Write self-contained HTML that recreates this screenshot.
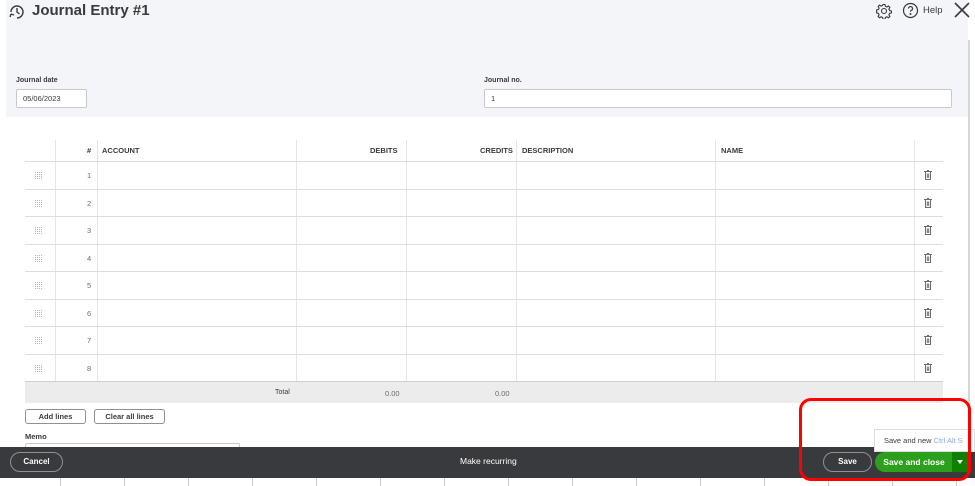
<!DOCTYPE html>
<html><head><meta charset="utf-8"><style>
*{margin:0;padding:0;box-sizing:border-box}
body{width:975px;height:486px;overflow:hidden;background:#fff;font-family:"Liberation Sans",Arial,sans-serif;position:relative;color:#393a3d}
.a{position:absolute}
.hd{font-size:7.5px;font-weight:bold;color:#393a3d}
.hl{background:#dcdde0;height:1px}
.vl{background:#e4e5e8;width:1px}
.num{font-size:7.5px;color:#6b6c72}
.btn{border:1px solid #8d9096;border-radius:3px;background:#fff;font-size:7.5px;font-weight:bold;text-align:center;line-height:13px;height:15px}
</style></head><body>
<div class="a" style="left:6px;top:0;width:962px;height:117px;background:#f4f5f8"></div>
<div class="a" style="left:968px;top:40px;width:2px;height:400px;background:#d6d7da"></div>
<svg class="a" style="left:8px;top:3px" width="18" height="18" viewBox="0 0 18 18" fill="none" stroke="#393a3d" stroke-width="1.4"><path d="M3 9a6 6 0 1 1 6 6" /><path d="M3 11l-1 3M3 11l3 1" /><path d="M9 5v4l2.5 2"/></svg>
<div class="a" style="left:32px;top:2px;font-size:15px;font-weight:bold;color:#393a3d">Journal Entry #1</div>
<svg class="a" style="left:876px;top:3px" width="16" height="16" viewBox="0 0 16 16" fill="none" stroke="#393a3d" stroke-width="1.1"><circle cx="8" cy="8" r="2.5"/><path d="M7 1.5h2l.4 1.8 1.5.7 1.6-1 1.4 1.4-1 1.6.7 1.5 1.8.4v2l-1.8.4-.7 1.5 1 1.6-1.4 1.4-1.6-1-1.5.7-.4 1.8H7l-.4-1.8-1.5-.7-1.6 1-1.4-1.4 1-1.6-.7-1.5-1.8-.4V7l1.8-.4.7-1.5-1-1.6 1.4-1.4 1.6 1 1.5-.7z"/></svg>
<svg class="a" style="left:902px;top:2px" width="17" height="17" viewBox="0 0 17 17" fill="none" stroke="#393a3d" stroke-width="1.2"><circle cx="8.5" cy="8.5" r="7"/><path d="M6.5 6.5a2 2 0 1 1 2.5 2c-.5.2-.5.6-.5 1.3"/><circle cx="8.5" cy="12" r=".4" fill="#393a3d"/></svg>
<div class="a" style="left:923px;top:5px;font-size:9.5px;color:#393a3d">Help</div>
<svg class="a" style="left:954px;top:2px" width="16" height="16" viewBox="0 0 16 16" stroke="#393a3d" stroke-width="1.6"><path d="M1 1l14 14M15 1L1 15"/></svg>
<div class="a hd" style="left:16px;top:77px;font-size:7px">Journal date</div>
<div class="a" style="left:16px;top:89px;width:71px;height:19px;background:#fff;border:1px solid #c9cacd;border-radius:2px;font-size:7.5px;line-height:17px;padding-left:6px;color:#393a3d">05/06/2023</div>
<div class="a hd" style="left:484px;top:77px;font-size:7px">Journal no.</div>
<div class="a" style="left:484px;top:89px;width:468px;height:19px;background:#fff;border:1px solid #c9cacd;border-radius:2px;font-size:7.5px;line-height:17px;padding-left:6px">1</div>
<div class="a" style="left:25px;top:381px;width:918px;height:22px;background:#ececec"></div>
<div class="a hl" style="left:25px;top:381px;width:918px;background:#cfd0d3"></div>
<div class="a vl" style="left:55px;top:140px;height:241px"></div>
<div class="a vl" style="left:97px;top:140px;height:241px"></div>
<div class="a vl" style="left:296px;top:140px;height:241px"></div>
<div class="a vl" style="left:406px;top:140px;height:241px"></div>
<div class="a vl" style="left:516px;top:140px;height:241px"></div>
<div class="a vl" style="left:715px;top:140px;height:241px"></div>
<div class="a vl" style="left:914px;top:140px;height:241px"></div>
<div class="a hd" style="left:87px;top:146px">#</div>
<div class="a hd" style="left:102px;top:146px">ACCOUNT</div>
<div class="a hd" style="left:370px;top:146px">DEBITS</div>
<div class="a hd" style="left:480px;top:146px">CREDITS</div>
<div class="a hd" style="left:522px;top:146px">DESCRIPTION</div>
<div class="a hd" style="left:721px;top:146px">NAME</div>
<div id="rows"></div>
<div class="a num" style="left:275px;top:389px;font-size:7px;color:#393a3d">Total</div>
<div class="a num" style="left:385px;top:389px">0.00</div>
<div class="a num" style="left:495px;top:389px">0.00</div>
<div class="a btn" style="left:25px;top:409px;width:61px">Add lines</div>
<div class="a btn" style="left:94px;top:409px;width:71px">Clear all lines</div>
<div class="a hd" style="left:25px;top:432px">Memo</div>
<div class="a" style="left:25px;top:443px;width:215px;height:6px;border:1px solid #c9cacd;border-bottom:none;border-radius:2px 2px 0 0"></div>
<div class="a" style="left:0;top:447px;width:975px;height:31px;background:#393a3d"></div>
<div class="a" style="left:10px;top:452px;width:53px;height:20px;border:1px solid #8d9096;border-radius:10px;color:#fff;font-size:8px;font-weight:bold;text-align:center;line-height:18px">Cancel</div>
<div class="a" style="left:460px;top:456px;color:#fff;font-size:8.5px">Make recurring</div>
<div class="a" style="left:823px;top:452px;width:49px;height:20px;border:1px solid #8d9096;border-radius:10px;color:#fff;font-size:8px;font-weight:bold;text-align:center;line-height:18px">Save</div>
<div class="a" style="left:875px;top:452px;width:94px;height:20px;background:#2ca01c;border-radius:10px 0 0 10px;color:#fff;font-size:8.5px;font-weight:bold;text-align:center;line-height:20px;padding-right:16px">Save and close</div>
<div class="a" style="left:952px;top:452px;width:17px;height:20px;background:#108000"></div>
<div class="a" style="left:957px;top:460px;width:0;height:0;border-left:3px solid transparent;border-right:3px solid transparent;border-top:4px solid #fff"></div>
<div class="a" style="left:874px;top:429px;width:101px;height:23px;background:#fff;border:1px solid #dcdde0;font-size:7.5px;line-height:22px;padding-left:9px;color:#393a3d;white-space:nowrap;overflow:hidden">Save and new <span style="color:#8ea5e8">Ctrl Alt S</span></div>
<div id="gl"></div>
<div class="a" style="left:799px;top:398px;width:172px;height:83px;border:3px solid #f00;border-radius:12px"></div>
<script>
var r='',ys=[161,189,216,244,271,299,326,354];
var dots='<path d="M0 0.5h7M0 2.5h7M0 4.5h7M0 6.5h7" stroke="#b5b6b9" stroke-width="1" stroke-dasharray="1 1"/>';
for(var i=0;i<8;i++){var y=ys[i];
r+='<div class="a hl" style="left:25px;top:'+y+'px;width:918px"></div>';
r+='<div class="a num" style="left:87px;top:'+(y+10)+'px">'+(i+1)+'</div>';
r+='<svg class="a" style="left:35px;top:'+(y+11)+'px" width="7" height="7" viewBox="0 0 7 7">'+dots+'</svg>';
r+='<svg class="a" style="left:924px;top:'+(y+9)+'px" width="8" height="10" viewBox="0 0 8 10" fill="none" stroke="#6b6c72" stroke-width="1"><path d="M0 1.5h8M3 .5h2M1.5 2v7.5h5V2M3.3 3.5v4.5M4.7 3.5v4.5"/></svg>';}
document.getElementById('rows').innerHTML=r;
var g='';for(var x=60;x<975;x+=64)g+='<div class="a" style="left:'+x+'px;top:478px;width:1px;height:8px;background:#c9cacd"></div>';
document.getElementById('gl').innerHTML=g;
</script>
</body></html>
